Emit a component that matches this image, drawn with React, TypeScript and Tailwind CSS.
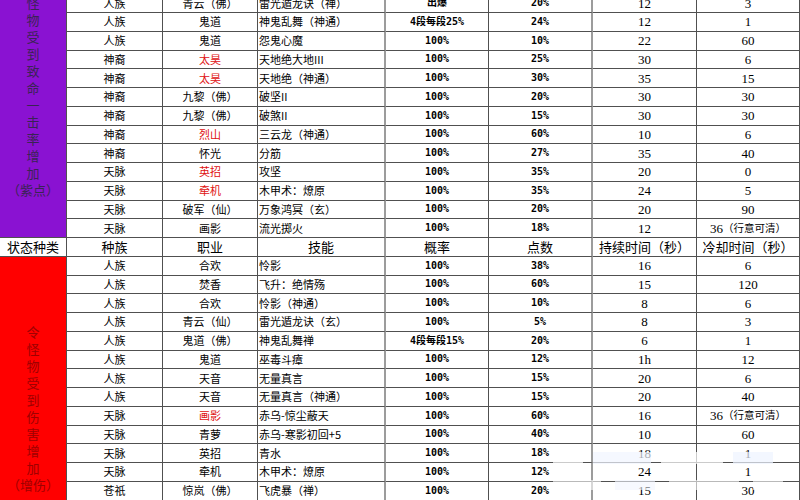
type Row = {
  race: string;
  job: string;
  red?: boolean;
  skill: string;
  rate: string;
  pts: string;
  dur: string;
  cd: string;
};

const upper: Row[] = [
  { race: "人族", job: "青云（佛）", skill: "雷光遁龙诀（禅）", rate: "出爆", pts: "20%", dur: "12", cd: "3" },
  { race: "人族", job: "鬼道", skill: "神鬼乱舞（神通）", rate: "4段每段25%", pts: "24%", dur: "12", cd: "1" },
  { race: "人族", job: "鬼道", skill: "怨鬼心魔", rate: "100%", pts: "10%", dur: "22", cd: "60" },
  { race: "神裔", job: "太昊", red: true, skill: "天地绝大地III", rate: "100%", pts: "25%", dur: "30", cd: "6" },
  { race: "神裔", job: "太昊", red: true, skill: "天地绝（神通）", rate: "100%", pts: "30%", dur: "35", cd: "15" },
  { race: "神裔", job: "九黎（佛）", skill: "破坚II", rate: "100%", pts: "20%", dur: "30", cd: "30" },
  { race: "神裔", job: "九黎（佛）", skill: "破煞II", rate: "100%", pts: "15%", dur: "30", cd: "30" },
  { race: "神裔", job: "烈山", red: true, skill: "三云龙（神通）", rate: "100%", pts: "60%", dur: "10", cd: "6" },
  { race: "神裔", job: "怀光", skill: "分筋", rate: "100%", pts: "27%", dur: "35", cd: "40" },
  { race: "天脉", job: "英招", red: true, skill: "攻坚", rate: "100%", pts: "35%", dur: "20", cd: "0" },
  { race: "天脉", job: "牵机", red: true, skill: "木甲术：燎原", rate: "100%", pts: "35%", dur: "24", cd: "5" },
  { race: "天脉", job: "破军（仙）", skill: "万象鸿冥（玄）", rate: "100%", pts: "20%", dur: "20", cd: "90" },
  { race: "天脉", job: "画影", skill: "流光掷火", rate: "100%", pts: "18%", dur: "12", cd: "36（行意可清）" },
];

const lower: Row[] = [
  { race: "人族", job: "合欢", skill: "怜影", rate: "100%", pts: "38%", dur: "16", cd: "6" },
  { race: "人族", job: "焚香", skill: "飞升：绝情殇", rate: "100%", pts: "60%", dur: "15", cd: "120" },
  { race: "人族", job: "合欢", skill: "怜影（神通）", rate: "100%", pts: "10%", dur: "8", cd: "6" },
  { race: "人族", job: "青云（仙）", skill: "雷光遁龙诀（玄）", rate: "100%", pts: "5%", dur: "8", cd: "3" },
  { race: "人族", job: "鬼道（佛）", skill: "神鬼乱舞禅", rate: "4段每段15%", pts: "20%", dur: "6", cd: "1" },
  { race: "人族", job: "鬼道", skill: "巫毒斗瘴", rate: "100%", pts: "12%", dur: "1h", cd: "12" },
  { race: "人族", job: "天音", skill: "无量真言", rate: "100%", pts: "15%", dur: "20", cd: "6" },
  { race: "人族", job: "天音", skill: "无量真言（神通）", rate: "100%", pts: "15%", dur: "20", cd: "40" },
  { race: "天脉", job: "画影", red: true, skill: "赤乌-惊尘蔽天", rate: "100%", pts: "60%", dur: "16", cd: "36（行意可清）" },
  { race: "天脉", job: "青萝", skill: "赤乌-寒影初回+5", rate: "100%", pts: "40%", dur: "10", cd: "60" },
  { race: "天脉", job: "英招", skill: "青水", rate: "100%", pts: "18%", dur: "18", cd: "1" },
  { race: "天脉", job: "牵机", skill: "木甲术：燎原", rate: "100%", pts: "12%", dur: "24", cd: "1" },
  { race: "苍祇", job: "惊岚（佛）", skill: "飞虎暴（禅）", rate: "100%", pts: "20%", dur: "15", cd: "30" },
];

const cols = "grid grid-cols-[96px_95px_128px_103px_104px_104px_103px]";
const cell = "flex items-center border-b border-r border-[#505050]";
const thick = "border-r-2 border-r-[#9c9c9c]";
const cjk = "font-['Noto_Sans_CJK_SC',sans-serif]";
const mono = "font-['DejaVu_Sans_Mono','Noto_Sans_CJK_SC',monospace] text-[10px] font-bold";
const serif = "font-['Liberation_Serif','Noto_Sans_CJK_SC',serif] text-[13px]";

function Num({ value }: { value: string }) {
  const m = value.match(/^(\d+)(.*)$/);
  if (!m || !m[2]) return <>{value}</>;
  return (
    <>
      {m[1]}
      <span className={`${cjk} text-[10.5px]`}>{m[2]}</span>
    </>
  );
}

function DataRow({ r }: { r: Row }) {
  return (
    <div className={`${cols} h-[18.75px] leading-none text-black`}>
      <div className={`${cell} ${cjk} justify-center text-[11px]`}>{r.race}</div>
      <div className={`${cell} ${cjk} justify-center text-[11px] ${r.red ? "text-[#e01010]" : ""}`}>
        {r.job}
      </div>
      <div className={`${cell} ${thick} ${cjk} pl-[1px] text-[11px]`}>{r.skill}</div>
      <div className={`${cell} ${mono} justify-center`}>{r.rate}</div>
      <div className={`${cell} ${thick} ${mono} justify-center`}>{r.pts}</div>
      <div className={`${cell} ${serif} justify-center`}>{r.dur}</div>
      <div className={`${cell} ${serif} justify-center`}>
        <Num value={r.cd} />
      </div>
    </div>
  );
}

// merged first-column cell: one glyph per line, the bracketed note on its own line
function Side({ text, note, className }: { text: string; note: string; className: string }) {
  return (
    <div className={`flex w-[67px] shrink-0 flex-col items-center border-r border-[#505050] ${cjk} text-[13px] leading-[17px] ${className}`}>
      <p className="w-[14px] break-all text-center">{text}</p>
      <p className="whitespace-nowrap">{note}</p>
    </div>
  );
}

const headers = ["种族", "职业", "技能", "概率", "点数", "持续时间（秒）", "冷却时间（秒）"];

export default function App() {
  return (
    <div className="relative h-[500px] w-[800px] overflow-hidden bg-white">
      <div className="-mt-[5.75px]">
        <section className="flex">
          <Side
            text="怪物受到致命一击率增加"
            note="（紫点）"
            className="border-b bg-[#8a12d2] pt-[-2px] text-[#3a2354]"
          />
          <div className="flex flex-col">
            {upper.map((r, i) => (
              <DataRow key={i} r={r} />
            ))}
          </div>
        </section>

        <div className={`flex h-[18.75px] ${cjk} text-[13px] leading-none`}>
          <div className="flex w-[67px] shrink-0 items-center justify-center border-b border-r border-[#505050]">
            状态种类
          </div>
          <div className={cols}>
            {headers.map((h, i) => (
              <div
                key={h}
                className={`flex items-center justify-center border-b border-r border-[#505050] ${
                  i === 2 || i === 4 ? thick : ""
                }`}
              >
                {h}
              </div>
            ))}
          </div>
        </div>

        <section className="flex">
          <Side
            text="令怪物受到伤害增加"
            note="（增伤）"
            className="bg-[#ff0000] pt-[66px] text-[#9e0000]"
          />
          <div className="flex flex-col">
            {lower.map((r, i) => (
              <DataRow key={i} r={r} />
            ))}
          </div>
        </section>
      </div>

      {/* watermark over the bottom right */}
      <div className="absolute left-[553px] top-[452px] flex h-[38px] w-[232px] flex-col justify-between">
        <div className="flex h-[12px] gap-[10px] opacity-70">
          <span className="w-[30px] bg-white" />
          <span className="w-[58px] bg-[#f2f6ff]" />
          <span className="w-[62px] bg-white" />
          <span className="w-[40px] bg-[#eef4ff]" />
        </div>
        <div className="flex h-[10px] gap-[14px] opacity-60">
          <span className="w-[48px] bg-white" />
          <span className="w-[40px] bg-[#f2f6ff]" />
          <span className="w-[70px] bg-white" />
          <span className="w-[30px] bg-white" />
        </div>
      </div>
    </div>
  );
}
